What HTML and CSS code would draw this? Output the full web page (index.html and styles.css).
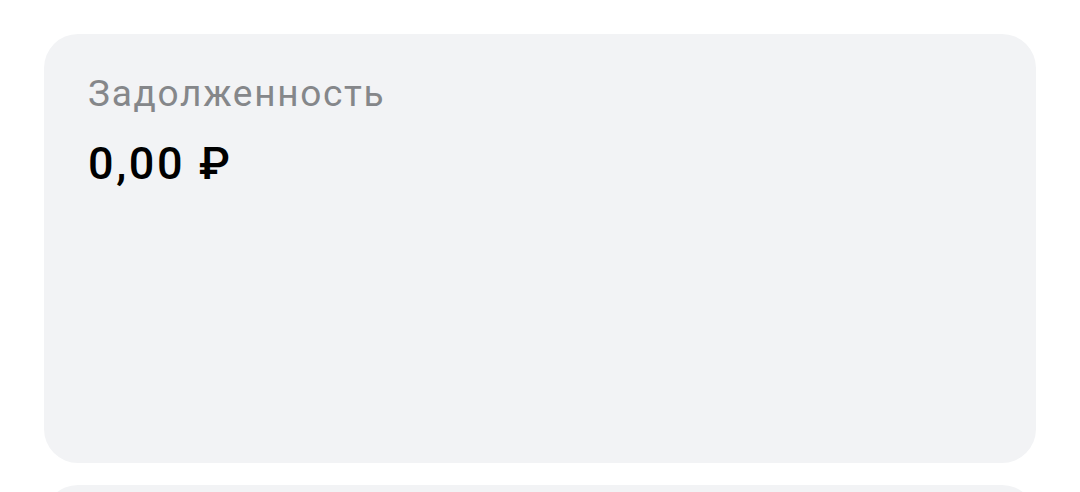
FILE: index.html
```html
<!DOCTYPE html>
<html lang="ru">

<head>
    <meta charset="UTF-8">
    <meta name="viewport" content="width=device-width, initial-scale=1.0">
    <title>Задолженность</title>
    <link rel="stylesheet" href="styles.css">
</head>

<body>
    <div class="sheet">
        <div class="card">
            <div class="card__label">Задолженность</div>
            <div class="card__value">0,00 ₽</div>
        </div>
        <div class="card"></div>
    </div>
</body>

</html>
```

FILE: styles.css
```css
body {
    margin: 0;
    font-family: Roboto, "Noto Sans", sans-serif;
    background-color: #ffffff;
    overflow: hidden;
}

.sheet {
    display: flex;
    flex-direction: column;
    gap: 22px;
    padding: 34px 44px;
    height: 100vh;
    box-sizing: border-box;
}

.card {
    background-color: #f2f3f5;
    border-radius: 34px;
    padding: 38px 44px;
    height: 429px;
    box-sizing: border-box;
    flex-shrink: 0;
}

.card__label {
    font-size: 37px;
    color: #85878a;
    letter-spacing: 1.7px;
}

.card__value {
    margin-top: 22px;
    font-size: 45px;
    font-weight: 500;
    color: #000000;
    letter-spacing: 2.6px;
}
```
